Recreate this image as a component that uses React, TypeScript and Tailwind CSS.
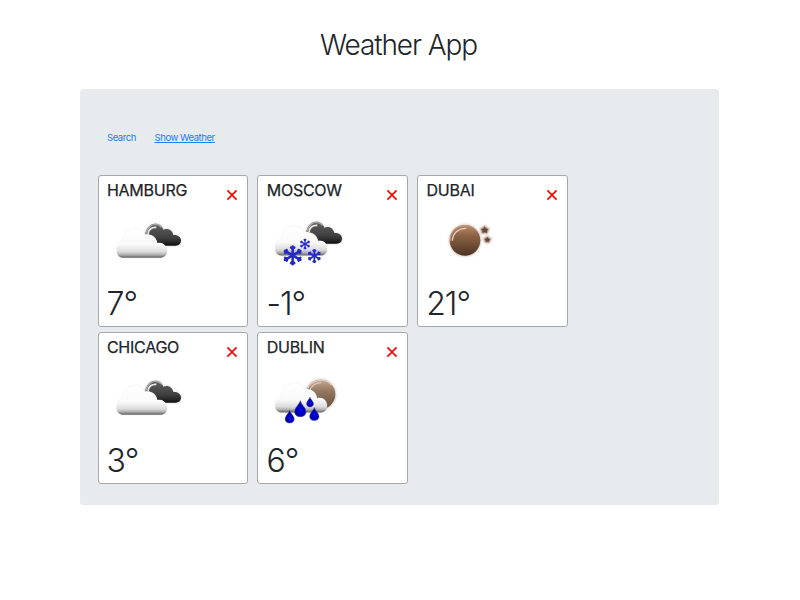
import React from "react";

type Kind = "clouds" | "snow" | "night" | "rain";

interface City {
  name: string;
  temp: string;
  kind: Kind;
}

const rows: City[][] = [
  [
    { name: "HAMBURG", temp: "7°", kind: "clouds" },
    { name: "MOSCOW", temp: "-1°", kind: "snow" },
    { name: "DUBAI", temp: "21°", kind: "night" },
  ],
  [
    { name: "CHICAGO", temp: "3°", kind: "clouds" },
    { name: "DUBLIN", temp: "6°", kind: "rain" },
  ],
];

const Defs = () => (
  <svg width="0" height="0" className="absolute" aria-hidden="true">
    <defs>
      <linearGradient id="white" x1="0" y1="0" x2="0" y2="1">
        <stop offset="0" stopColor="#ffffff" />
        <stop offset="0.55" stopColor="#fafafa" />
        <stop offset="0.8" stopColor="#dcdcdc" />
        <stop offset="0.9" stopColor="#b0b0b0" />
        <stop offset="1" stopColor="#606060" />
      </linearGradient>
      <linearGradient id="dark" x1="0" y1="0" x2="0" y2="1">
        <stop offset="0" stopColor="#606060" />
        <stop offset="0.6" stopColor="#424242" />
        <stop offset="0.85" stopColor="#282828" />
        <stop offset="1" stopColor="#0c0c0c" />
      </linearGradient>
      <linearGradient id="moon" x1="0" y1="0" x2="0" y2="1">
        <stop offset="0" stopColor="#b98a68" />
        <stop offset="0.35" stopColor="#8c6344" />
        <stop offset="1" stopColor="#4c3424" />
      </linearGradient>
      <linearGradient id="paleMoon" x1="0" y1="0" x2="0" y2="1">
        <stop offset="0" stopColor="#c5a78f" />
        <stop offset="0.4" stopColor="#927660" />
        <stop offset="1" stopColor="#6e4f39" />
      </linearGradient>
      <radialGradient id="drop" cx="0.55" cy="0.6" r="0.6">
        <stop offset="0" stopColor="#0808e0" />
        <stop offset="0.6" stopColor="#0303b8" />
        <stop offset="1" stopColor="#050570" />
      </radialGradient>
      <filter id="soft" x="-10%" y="-10%" width="120%" height="120%">
        <feGaussianBlur stdDeviation="1.9" />
      </filter>
      <filter id="halo" x="-20%" y="-20%" width="140%" height="140%">
        <feGaussianBlur stdDeviation="2.8" />
      </filter>
    </defs>
  </svg>
);

const WHITE_CLOUD =
  "M81 257C70 256 64 246 65 235C65 223 73 211 84 207C85 188 99 171 118 170C132 168 143 174 149 188C166 183 184 194 187 214C202 209 216 221 216 236C216 248 210 256 199 257Z";
const DARK_CLOUD =
  "M150 188C154 168 166 155 181 155C193 155 202 163 205 173C220 167 232 175 235 189C247 187 259 195 258 207C257 216 251 221 242 221L210 221C203 211 195 211 187 213C184 194 167 184 150 188Z";

const WhiteCloud = () => (
  <g>
    <path d={WHITE_CLOUD} fill="#a0a0a0" opacity="0.2" filter="url(#halo)" />
    <path d={WHITE_CLOUD} fill="url(#white)" filter="url(#soft)" />
  </g>
);

const DarkCloud = () => (
  <g>
    <path d={DARK_CLOUD} fill="#555" opacity="0.35" filter="url(#halo)" />
    <path d={DARK_CLOUD} fill="url(#dark)" filter="url(#soft)" />
    <path
      d="M152 187C158 166 169 157 181 157C189 157 195 160 200 166"
      fill="none"
      stroke="#aaaaaa"
      strokeWidth="4"
      filter="url(#soft)"
    />
    <path d="M159 186C161 173 170 165 184 166" fill="none" stroke="#e6e6e6" strokeWidth="5" filter="url(#soft)" />
  </g>
);

const Flake = ({ x, y, r }: { x: number; y: number; r: number }) => (
  <g transform={`translate(${x} ${y}) scale(${r / 28})`} stroke="#2529c2" strokeWidth="7" fill="none" strokeLinecap="round">
    {[0, 60, 120, 180, 240, 300].map((a) => (
      <path key={a} transform={`rotate(${a})`} d="M0 -4V-25M0 -17L-4.5 -22M0 -17L4.5 -22" />
    ))}
  </g>
);

const Drop = ({ x, y, s }: { x: number; y: number; s: number }) => (
  <path
    transform={`translate(${x} ${y}) scale(${s})`}
    d="M0 -24C2 -12 17 -4 17 9C17 18 10 24 0 24C-10 24 -17 18 -17 9C-17 -4 -3 -12 0 -24Z"
    fill="url(#drop)"
    stroke="#343486"
    strokeWidth="1.5"
  />
);

const WeatherIcon = ({ kind }: { kind: Kind }) => (
  <svg viewBox="36 120 240 180" width="80" height="60" className="block" aria-hidden="true">
    {kind === "clouds" && (
      <>
        <DarkCloud />
        <WhiteCloud />
      </>
    )}
    {kind === "snow" && (
      <g transform="translate(2 0)">
        <g transform="translate(4 -6)">
          <DarkCloud />
        </g>
        <g transform="translate(-5 -6.5) scale(1.03 1)">
          <WhiteCloud />
        </g>
        <g filter="url(#soft)">
          <Flake x={114} y={250} r={30} />
          <Flake x={151} y={216} r={16} />
          <Flake x={179} y={252} r={21} />
        </g>
      </g>
    )}
    {kind === "night" && (
      <g transform="translate(2 0)">
        <circle cx="151" cy="205" r="48" fill="#a07b60" opacity="0.45" filter="url(#halo)" />
        <circle cx="151" cy="205" r="46" fill="url(#moon)" filter="url(#soft)" />
        <path d="M107 208C105 181 126 162 150 161C168 161 180 168 188 178" fill="none" stroke="#c09a80" strokeWidth="3" filter="url(#soft)" />
        <path d="M113 206C114 184 130 169 155 169" fill="none" stroke="#e6d0c0" strokeWidth="4" filter="url(#soft)" />
        <g fill="#7a523c" stroke="#7a523c" strokeWidth="4" filter="url(#halo)">
          <path d="M210 163L213 170L221 171L216 176L217 183L210 180L203 183L204 176L199 171L207 170Z" />
          <path d="M218 195L221 200L227 201L223 205L223 210L218 208L213 210L213 205L209 201L215 200Z" />
        </g>
        <g fill="#6a4430" filter="url(#soft)">
          <path d="M210 163L213 170L221 171L216 176L217 183L210 180L203 183L204 176L199 171L207 170Z" />
          <path d="M218 195L221 200L227 201L223 205L223 210L218 208L213 210L213 205L209 201L215 200Z" />
        </g>
      </g>
    )}
    {kind === "rain" && (
      <g transform="translate(2 0)">
        <circle cx="198" cy="196" r="46" fill="#8e7460" opacity="0.4" filter="url(#halo)" />
        <circle cx="198" cy="196" r="44" fill="url(#paleMoon)" filter="url(#soft)" />
        <path
          d="M155 192C158 170 178 154 199 154C213 154 224 160 231 168M165 185C171 170 184 161 200 161"
          fill="none"
          stroke="#dccbbd"
          strokeWidth="3.5"
          filter="url(#soft)"
        />
        <g transform="translate(-5 -6.5) scale(1.03 1)">
          <WhiteCloud />
        </g>
        <g filter="url(#soft)">
          <Drop x={105} y={263} s={0.8} />
          <Drop x={137} y={239} s={1} />
          <Drop x={166} y={219} s={0.62} />
          <Drop x={179} y={255} s={0.82} />
        </g>
      </g>
    )}
  </svg>
);

const Card = ({ city }: { city: City }) => (
  <div className="flex h-[152px] w-[150.5px] flex-col rounded-[3px] border border-[#a4a9ae] bg-white px-2">
    <div className="flex h-9 justify-between">
      <h2 className="pt-[4px] pl-[0.3px] text-[16px] leading-5 font-normal tracking-[-0.25px] [-webkit-text-stroke:0.25px_#212529]">
        {city.name}
      </h2>
      <button aria-label="Remove" className="mr-[0.8px] h-[37px]">
        <svg width="12" height="12" viewBox="0 0 12 12" className="block">
          <path d="M1.4 1.4L10.6 10.6M10.6 1.4L1.4 10.6" stroke="#fa0000" strokeWidth="1.6" />
        </svg>
      </button>
    </div>
    <WeatherIcon kind={city.kind} />
    <div className="pt-[12px] text-[32px] leading-10 font-light tracking-[-1px]">{city.temp}</div>
  </div>
);

export default function App() {
  return (
    <div className="flex h-[600px] w-[800px] flex-col bg-white font-['Inter',sans-serif] text-[#212529]">
      <Defs />
      <h1 className="h-[89px] pt-[27px] pr-[3px] text-center text-[28px] leading-9 font-light tracking-[-1.1px]">
        Weather App
      </h1>
      <main className="ml-[79.5px] h-[416px] w-[639.5px] rounded-[3px] bg-[#e7ebee] pt-[41px] pl-[18.1px]">
        <nav className="flex h-[45px] gap-[18.6px] pl-[9.4px] text-[9.5px] leading-[15px] tracking-[-0.43px] text-[#1480fa]">
          <a>Search</a>
          <a className="underline">Show Weather</a>
        </nav>
        <div className="flex flex-col gap-[5px]">
          {rows.map((row, i) => (
            <div key={i} className="flex gap-[9.3px]">
              {row.map((city) => (
                <Card key={city.name} city={city} />
              ))}
            </div>
          ))}
        </div>
      </main>
    </div>
  );
}
